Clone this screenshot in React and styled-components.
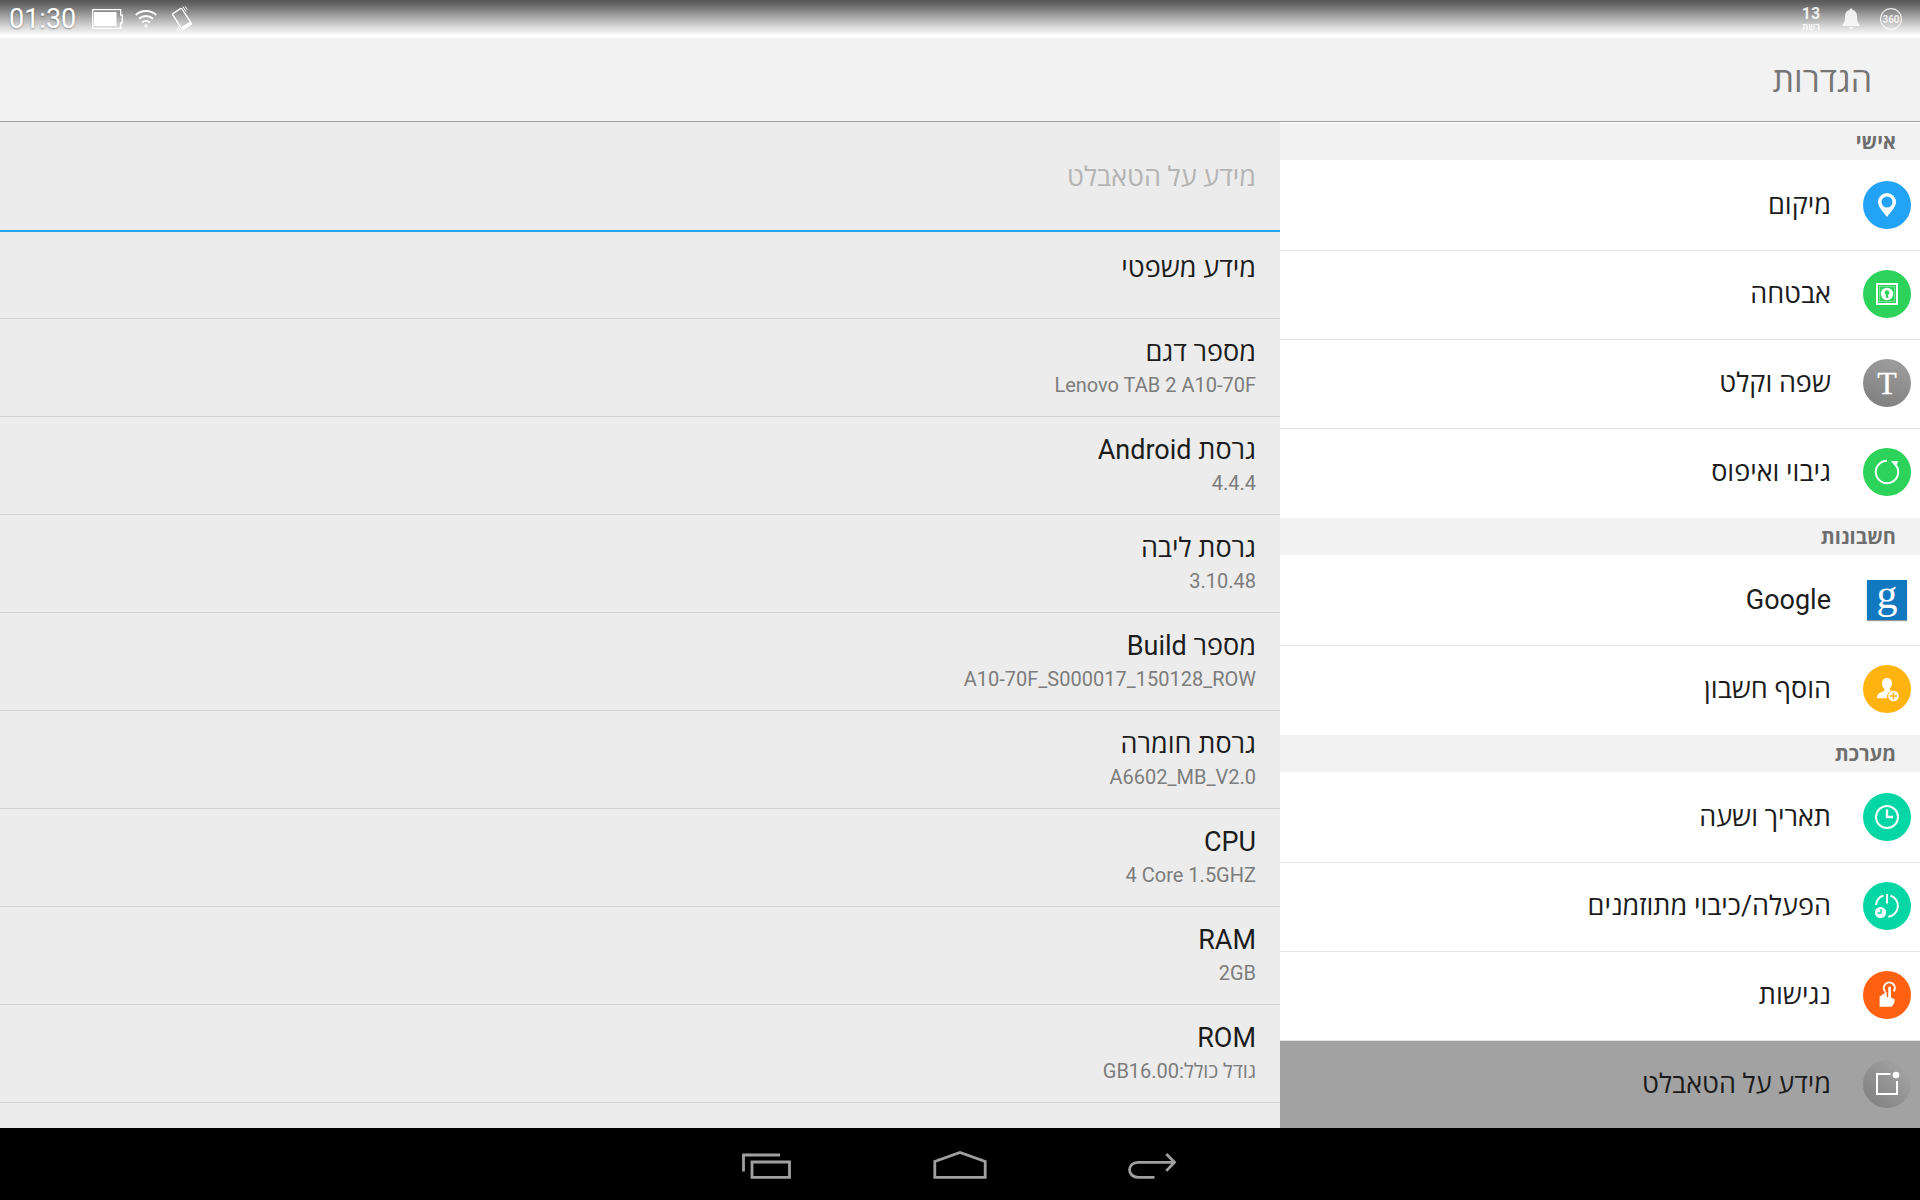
import styled, { createGlobalStyle } from "styled-components";

const personal = [
    { label: "מיקום", icon: "location", color: "#22a3f5" },
    { label: "אבטחה", icon: "security", color: "#2dd25b" },
    { label: "שפה וקלט", icon: "language", color: "linear-gradient(200deg, #a0a0a0, #7d7d7d)" },
    { label: "גיבוי ואיפוס", icon: "backup", color: "#2dd25b" },
];

const accounts = [
    { label: "Google", icon: "google" },
    { label: "הוסף חשבון", icon: "addUser", color: "#ffb30f" },
];

const system = [
    { label: "תאריך ושעה", icon: "clock", color: "#04d6a5" },
    { label: "הפעלה/כיבוי מתוזמנים", icon: "power", color: "#04d6a5" },
    { label: "נגישות", icon: "touch", color: "#ff6110" },
    { label: "מידע על הטאבלט", icon: "about", color: "linear-gradient(225deg, #a2a2a2 15%, #7d7d7d)", active: true },
];

const details = [
    { name: "מספר דגם", value: "Lenovo TAB 2 A10-70F" },
    { name: "גרסת Android", value: "4.4.4" },
    { name: "גרסת ליבה", value: "3.10.48" },
    { name: "מספר Build", value: "A10-70F_S000017_150128_ROW" },
    { name: "גרסת חומרה", value: "A6602_MB_V2.0" },
    { name: "CPU", value: "4 Core 1.5GHZ" },
    { name: "RAM", value: "2GB" },
    { name: "ROM", value: "גודל כולל:GB16.00" },
];

// Tous les dessins sont sur une grille de 48 x 48, centrés en 24,24
const drawings = {
    location: (
        <path
            fill="#fff"
            fillRule="evenodd"
            d="M24 12a9 9 0 0 1 9 9c0 5-5 9.500-9 15-4-5.500-9-10-9-15a9 9 0 0 1 9-9zm0 3.500a5.500 5.500 0 1 0 0 11 5.500 5.500 0 0 0 0-11z"
        />
    ),
    security: (
        <>
            <rect x="14" y="14" width="20" height="20" fill="none" stroke="#fff" strokeWidth="2" />
            <rect x="16.500" y="16.500" width="15" height="15" fill="none" stroke="#fff" strokeWidth="0.6" opacity="0.6" />
            <circle cx="24" cy="24" r="6.200" fill="#fff" />
            <path d="M24 20.200a2.300 2.300 0 0 1 1.200 4.300v3.200h-2.400v-3.200a2.300 2.300 0 0 1 1.200-4.300z" fill="#2dd25b" />
        </>
    ),
    language: (
        <text x="24" y="35" textAnchor="middle" fill="#fff" stroke="#fff" strokeWidth="0.3" fontSize="32" fontFamily="Liberation Serif, serif">
            T
        </text>
    ),
    backup: (
        <>
            <path d="M24 12.800a11.200 11.200 0 1 0 9.400 5.100" fill="none" stroke="#fff" strokeWidth="2" />
            <path d="M28 13.200l7-.2-1.800 6.200z" fill="#fff" />
        </>
    ),
    addUser: (
        <>
            <path
                fill="#fff"
                d="M24 13c3 0 5 2.200 5 5.200 0 2.500-1.400 4.200-2.200 5.300-.3 1 .2 1.700 1.500 2.200a6.500 6.500 0 0 0-4.300 7.500H14c0-4 2-5.300 5.500-6.400 1.800-.6 2.300-1.800 1.600-3.200-1-1.200-2.100-3-2.100-5.400 0-3 2-5.200 5-5.200z"
            />
            <circle cx="30.500" cy="31" r="5.300" fill="#fff" />
            <path d="M30.500 27.500v7M27 31h7" stroke="#ffb30f" strokeWidth="1.500" />
        </>
    ),
    clock: (
        <>
            <circle cx="24" cy="24" r="11" fill="none" stroke="#fff" strokeWidth="2" />
            <path d="M24 16.500V24h6" fill="none" stroke="#fff" strokeWidth="2.400" />
        </>
    ),
    power: (
        <>
            <path d="M24 12v9.500" stroke="#fff" strokeWidth="2" />
            <path d="M27.500 13.500a11 11 0 0 1-2.200 21.300M20.500 13.500a11 11 0 0 0-7.500 9.500" fill="none" stroke="#fff" strokeWidth="2" />
            <circle cx="17.500" cy="30.500" r="5.600" fill="#fff" />
            <path d="M18 27v4h-3.500" fill="none" stroke="#04d6a5" strokeWidth="1.300" />
        </>
    ),
    touch: (
        <>
            <path d="M22.300 20.700a5.500 5.500 0 1 1 8.300-.3" fill="none" stroke="#fff" strokeWidth="2" />
            <path
                fill="#fff"
                d="M25.200 17a1.400 1.400 0 0 1 2.800 0v9.500l3.600 1.800c.3 3-.8 4.800-2.900 7.500H16.600V25.500c0-1 2-1.200 2.200 0v1.800V24c.3-1.200 2.300-1.200 2.500 0v2.500V22c.3-1.200 2.200-1.200 2.400 0v4.200h1.500z"
            />
        </>
    ),
    about: (
        <>
            <path d="M27.500 14H14v20h20V21" fill="none" stroke="#fff" strokeWidth="2" />
            <circle cx="33" cy="15" r="3.300" fill="#fff" />
        </>
    ),
};

const MenuSection = ({ title, items }) => {
    return (
        <section>
            <SectionTitle>{title}</SectionTitle>
            <MenuList>
                {items.map((item) => (
                    <li key={item.label}>
                        <MenuLink href="#" $active={item.active}>
                            {item.icon === "google" ? (
                                <GoogleBadge aria-hidden="true">g</GoogleBadge>
                            ) : (
                                <RoundIcon $color={item.color} viewBox="0 0 48 48" aria-hidden="true">
                                    {drawings[item.icon]}
                                </RoundIcon>
                            )}
                            <span>{item.label}</span>
                        </MenuLink>
                    </li>
                ))}
            </MenuList>
        </section>
    );
};

const App = () => {
    return (
        <Screen dir="rtl" lang="he">
            <GlobalStyle />
            <StatusBar dir="ltr">
                <StatusGroup>
                    <Clock>01:30</Clock>
                    <svg width="31" height="20" viewBox="0 0 31 20">
                        <path d="M.700.700h28v5.500h1.600v7.600h-1.600v5.500H.700z" fill="none" stroke="#fff" strokeWidth="1.300" />
                        <path d="M2 3h22.500v14H2z" fill="#fff" />
                    </svg>
                    <svg width="22" height="20" viewBox="0 0 22 20" fill="none" stroke="#fff" strokeWidth="2">
                        <path d="M.800 6c5.700-5.300 14.700-5.300 20.400 0M4 9.800c4-3.700 10-3.700 14 0M7.200 13.400c2.200-2 5.400-2 7.600 0" />
                        <circle cx="11" cy="17" r="1.300" strokeWidth="1" />
                    </svg>
                    <svg width="26" height="26" viewBox="0 0 26 26" fill="none" stroke="#fff">
                        <g transform="rotate(-33 13 13)">
                            <rect x="7.500" y="3.500" width="11" height="19" rx="1" strokeWidth="1.400" />
                            <path d="M7.500 20h11v2.500h-11z" fill="#fff" />
                            <path d="M20.500 3v6M22.500 4v4M5.500 17v6M3.500 18v4" strokeWidth="0.9" />
                        </g>
                    </svg>
                </StatusGroup>
                <StatusGroup>
                    <ChannelBadge>
                        <b>13</b>
                        <small>רשת</small>
                    </ChannelBadge>
                    <svg width="24" height="24" viewBox="0 0 24 24" fill="#fff" opacity="0.85">
                        <path d="M12 1.500c1 0 1.500.6 1.500 1.500 3.200.8 4.500 3 4.500 6.500 0 4 .5 5.700 2.500 8.500v1h-17v-1C5.500 15.200 6 13.500 6 9.500 6 6 7.300 3.800 10.500 3c0-.9.500-1.500 1.500-1.500zM10 20h4c0 1.300-.8 2-2 2s-2-.7-2-2z" />
                    </svg>
                    <svg width="24" height="24" viewBox="0 0 24 24" opacity="0.8">
                        <circle cx="12" cy="12" r="10.400" fill="none" stroke="#fff" strokeWidth="1.200" />
                        <text x="12" y="15.500" textAnchor="middle" fill="#fff" fontSize="10" fontWeight="700">360</text>
                    </svg>
                </StatusGroup>
            </StatusBar>
            <TitleBar>
                <h1>הגדרות</h1>
            </TitleBar>
            <Columns>
                <Menu>
                    <MenuSection title="אישי" items={personal} />
                    <MenuSection title="חשבונות" items={accounts} />
                    <MenuSection title="מערכת" items={system} />
                </Menu>
                <Panel>
                    <PanelTitle>מידע על הטאבלט</PanelTitle>
                    <LegalLink href="#">מידע משפטי</LegalLink>
                    <Details>
                        {details.map((detail) => (
                            <DetailRow key={detail.name}>
                                <dt>{detail.name}</dt>
                                <dd>{detail.value}</dd>
                            </DetailRow>
                        ))}
                    </Details>
                </Panel>
            </Columns>
            <NavBar dir="ltr">
                <NavButton aria-label="אפליקציות אחרונות">
                    <NavIcon viewBox="0 0 56 32">
                        <path d="M40 7H3.500v16.500M12 14h37.500v15.300H12z" />
                    </NavIcon>
                </NavButton>
                <NavButton aria-label="בית">
                    <NavIcon viewBox="0 0 56 32">
                        <path d="M2.800 29.300V13.400L28 4.400l25.200 9v15.900z" />
                    </NavIcon>
                </NavButton>
                <NavButton aria-label="חזרה">
                    <NavIcon viewBox="0 0 56 32">
                        <path d="M30.500 29.300H14c-5 0-8.500-3.300-8.500-7.500s3.500-7.500 8.500-7.500h36M42.300 6l8.200 8.300-8.200 8.600" />
                    </NavIcon>
                </NavButton>
            </NavBar>
        </Screen>
    );
};

const GlobalStyle = createGlobalStyle`
    * {
        box-sizing: border-box;
    }
    body {
        margin: 0;
        font-family: Roboto, "Open Sans", sans-serif;
        color: #1c1c1c;
    }
    h1, h2, h3, ul, dl, dt, dd {
        margin: 0;
        padding: 0;
        font-weight: 400;
    }
    a {
        color: inherit;
        text-decoration: none;
    }
`;

const Screen = styled.div`
    display: flex;
    flex-direction: column;
    height: 100vh;
    background: #f2f2f2;
`;

const StatusBar = styled.div`
    display: flex;
    justify-content: space-between;
    align-items: center;
    height: 38px;
    padding: 0 17px 0 9px;
    background: linear-gradient(#555, #6c6c6c 15%, #a8a8a8 45%, #e0e0e0 75%, #fff 95%);
    color: white;
`;

const StatusGroup = styled.div`
    display: flex;
    align-items: center;
    gap: 12px;

    & + & {
        gap: 16px;
    }
`;

const Clock = styled.time`
    font-size: 27px;
    line-height: 38px;
    margin-right: 4px;
    text-shadow: 0 1px 2px rgba(0, 0, 0, 0.35);
`;

const ChannelBadge = styled.div`
    display: flex;
    flex-direction: column;
    align-items: center;
    width: 24px;
    opacity: 0.85;

    b {
        font-size: 16px;
        line-height: 16px;
    }
    small {
        font-size: 9px;
        font-weight: 700;
        line-height: 10px;
    }
`;

const TitleBar = styled.header`
    display: flex;
    align-items: center;
    height: 84px;
    padding: 0 48px;
    border-bottom: 1px solid #9f9f9f;

    h1 {
        font-size: 34px;
        line-height: 40px;
        color: #757575;
    }
`;

const Columns = styled.div`
    display: grid;
    grid-template-columns: 1fr 2fr;
    flex: 1;
    min-height: 0;
`;

const Menu = styled.nav`
    overflow: hidden;
    padding-top: 1px;
    background: white;
`;

const SectionTitle = styled.h2`
    height: 38px;
    padding: 0 24px;
    border-bottom: 1px solid white;
    background: #f2f2f2;
    font-size: 20px;
    font-weight: 700;
    line-height: 38px;
    color: #6e6e6e;
`;

const MenuList = styled.ul`
    list-style: none;
    padding-top: 1px;

    li + li {
        border-top: 1px solid #e5e5e5;
    }
    li:last-child {
        padding-bottom: 1px;
    }
`;

const MenuLink = styled.a`
    display: flex;
    align-items: center;
    gap: 32px;
    height: 88px;
    padding: 0 9px 2px;
    background: ${(props) => (props.$active ? "#a2a2a2" : "white")};
    font-size: 27px;
    line-height: 32px;
`;

const RoundIcon = styled.svg`
    flex: none;
    width: 48px;
    height: 48px;
    border-radius: 50%;
    background: ${(props) => props.$color};
`;

const GoogleBadge = styled.span`
    flex: none;
    width: 40px;
    height: 40px;
    margin: 0 4px;
    background: #1279c0;
    box-shadow: 0 1px 1px rgba(0, 0, 0, 0.4);
    font-family: "Liberation Serif", serif;
    font-size: 42px;
    line-height: 28px;
    text-align: center;
    color: white;
`;

const Panel = styled.main`
    overflow: hidden;
    background: #ececec;
`;

const PanelTitle = styled.h2`
    padding: 39px 24px 37px;
    border-bottom: 2px solid #22a3f5;
    font-size: 27px;
    line-height: 32px;
    color: #b4b4b4;
`;

const LegalLink = styled.a`
    display: block;
    padding: 20px 24px 34px;
    border-bottom: 1px solid #d2d2d2;
    font-size: 27px;
    line-height: 32px;
`;

const Details = styled.dl`
    display: flex;
    flex-direction: column;
`;

/* plaintext : chaque valeur garde son propre sens de lecture ("4 Core" sinon s'inverse) */
const DetailRow = styled.div`
    display: flex;
    flex-direction: column;
    gap: 5px;
    padding: 17px 24px 19px;
    border-bottom: 1px solid #d2d2d2;

    dt {
        font-size: 27px;
        line-height: 32px;
    }
    dd {
        font-size: 20px;
        line-height: 24px;
        text-align: right;
        unicode-bidi: plaintext;
        color: #7c7c7c;
    }
`;

const NavBar = styled.footer`
    display: flex;
    justify-content: center;
    height: 72px;
    background: black;
`;

const NavButton = styled.button`
    display: flex;
    align-items: center;
    justify-content: center;
    width: 192px;
    padding: 0;
    border: none;
    background: none;
`;

const NavIcon = styled.svg`
    width: 56px;
    height: 32px;
    fill: none;
    stroke: #a0a0a0;
    stroke-width: 2.8;
`;

export default App;
